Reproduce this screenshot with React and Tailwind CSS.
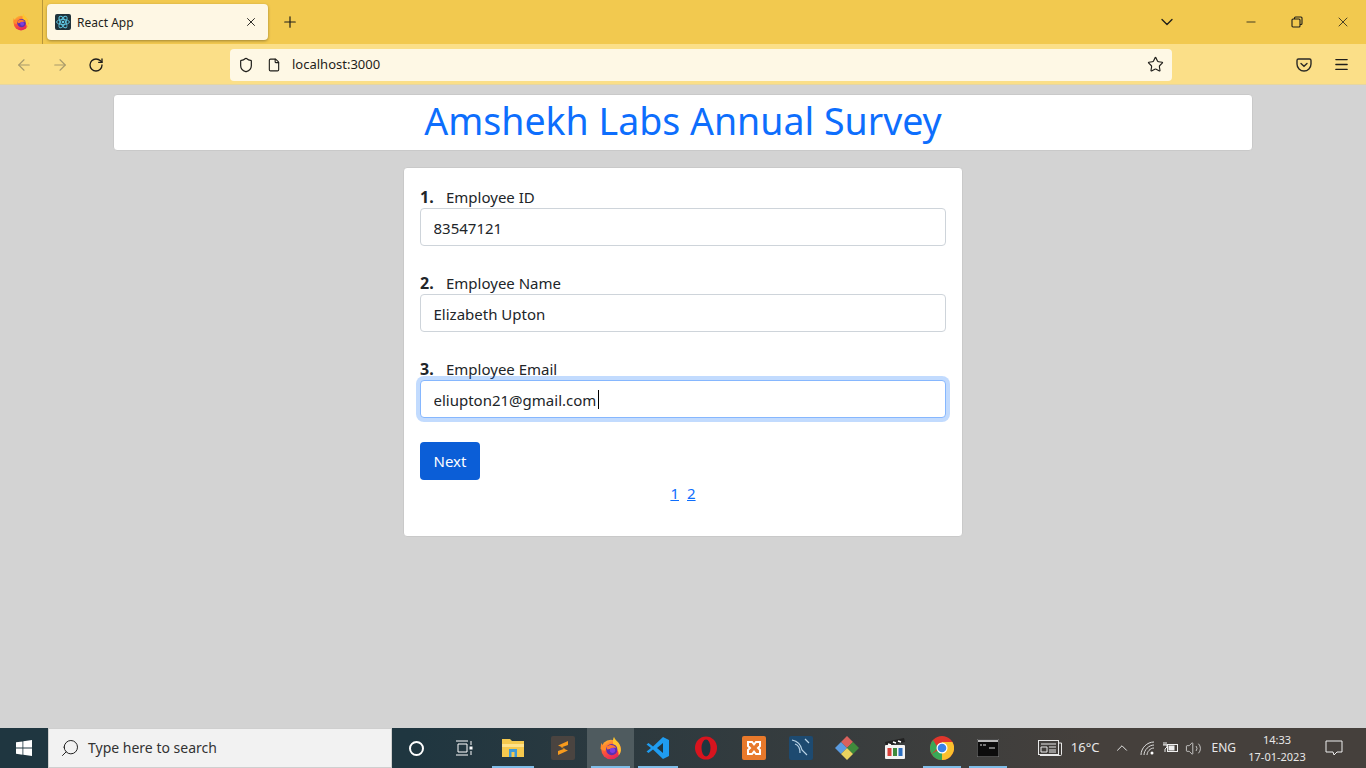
import React from "react";
import { ArrowLeft, ArrowRight, RotateCw, Shield, File, Star, ChevronDown, ChevronUp, Minus, X, Plus, Menu, Search, Volume2 } from "lucide-react";

const UI = "font-['Noto_Sans','Open_Sans',sans-serif]";

function Firefox({ size = 16 }) {
  return (
    <svg width={size} height={size} viewBox="0 0 32 32">
      <defs>
        <linearGradient id={`ff${size}`} x1="0.2" y1="0" x2="0.7" y2="1">
          <stop offset="0" stopColor="#ffbd2e" />
          <stop offset="0.45" stopColor="#ff5a36" />
          <stop offset="1" stopColor="#e3205f" />
        </linearGradient>
      </defs>
      <circle cx="16" cy="18" r="13" fill={`url(#ff${size})`} />
      <path d="M20 1c1 5 8 7 9 15 1 5-1 8-3 10 1-5-2-9-6-12-2-4-2-9 0-13z" fill="#ffc42e" />
      <path d="M3 9c1 4 4 5 8 5l-3 6-6-3z" fill="#ff8a2b" />
      <circle cx="17" cy="18" r="7.5" fill="#5b2fb0" />
      <path d="M10 14c4-3 11-3 13 2-3-1-5 0-7 1l-5 1z" fill="#ff7a2f" />
      <circle cx="18" cy="19" r="3.5" fill="#7d3fe0" />
    </svg>
  );
}

function ReactFav() {
  return (
    <svg width="16" height="16" viewBox="0 0 16 16">
      <rect width="16" height="16" rx="2" fill="#20333b" />
      <g fill="none" stroke="#61c9e4" strokeWidth="0.9">
        <ellipse cx="8" cy="8" rx="6.4" ry="2.6" />
        <ellipse cx="8" cy="8" rx="6.4" ry="2.6" transform="rotate(60 8 8)" />
        <ellipse cx="8" cy="8" rx="6.4" ry="2.6" transform="rotate(120 8 8)" />
      </g>
      <circle cx="8" cy="8" r="1.3" fill="#61c9e4" />
    </svg>
  );
}

function Pocket() {
  return (
    <svg width="16" height="16" viewBox="0 0 16 16" fill="none" stroke="#2b2a26" strokeWidth="1.4">
      <path d="M2.5 2h11A1.5 1.5 0 0 1 15 3.500V7a7 7 0 0 1-14 0V3.500A1.500 1.500 0 0 1 2.500 2z" />
      <path d="M5 6.500l3 2.800 3-2.800" strokeLinecap="round" />
    </svg>
  );
}

function Restore() {
  return (
    <svg width="12" height="12" viewBox="0 0 12 12" fill="none" stroke="#1f1e1a" strokeWidth="1.1">
      <rect x="1" y="3" width="8" height="8" rx="1" />
      <path d="M3.500 3V2a1 1 0 0 1 1-1h5.500a1 1 0 0 1 1 1v5.500a1 1 0 0 1-1 1H9" />
    </svg>
  );
}

function Field({ n, label, value, focused, last }) {
  return (
    <div className={last ? "mb-6" : "mb-[26px]"}>
      <label className="flex h-[22px] items-center text-[15px] leading-6 text-[#212529]">
        <b className="w-[26px] text-base font-bold">{n}.</b>
        {label}
      </label>
      <div className="relative">
        <input
          readOnly
          value={value}
          className={
            "block h-[38px] w-full rounded border bg-white pt-[1px] pl-[12.5px] pr-[13px] text-[15px] text-[#212529] outline-none " +
            (focused
              ? "border-[#86b7fe] shadow-[0_0_0_4px_rgba(13,110,253,0.25)]"
              : "border-[#ced4da]")
          }
        />
        {focused && <span className="absolute left-[178px] top-[10px] h-[19px] w-px bg-black" />}
      </div>
    </div>
  );
}

function Tb({ children, active, open, w = 48 }) {
  return (
    <div
      className={"relative flex h-10 shrink-0 items-center justify-center " + (active ? "bg-[#4f5b5f]" : "")}
      style={{ width: w }}
    >
      {children}
      {open && <span className="absolute bottom-0 left-[4px] right-[4px] h-[2px] bg-[#7fbde8]" />}
    </div>
  );
}

export default function App() {
  return (
    <div className={"flex h-screen w-full flex-col overflow-hidden bg-[#d3d3d3] " + UI}>
      {/* tab strip */}
      <div className="flex h-[44px] shrink-0 items-center bg-[#f2c94f]">
        <div className="flex h-full w-[43px] items-center justify-center border-r border-[#b8963a]">
          <Firefox size={18} />
        </div>
        <div className="ml-[4px] flex h-[36px] w-[221px] items-center rounded bg-[#fef7e4] pl-2 pr-[10px] shadow-[0_1px_3px_rgba(0,0,0,0.35)]">
          <ReactFav />
          <span className="ml-[6px] flex-1 pt-[1px] text-xs text-[#1f1e1a]">React App</span>
          <X size={14} strokeWidth={1.6} className="text-[#1f1e1a]" />
        </div>
        <Plus size={18} strokeWidth={1.6} className="ml-[13px] text-[#1f1e1a]" />
        <div className="flex-1" />
        <ChevronDown size={20} strokeWidth={1.6} className="mr-[67px] text-[#1f1e1a]" />
        <Minus size={14} strokeWidth={1.4} className="mr-[33px] text-[#1f1e1a]" />
        <Restore />
        <X size={16} strokeWidth={1.2} className="ml-[32px] mr-[15px] text-[#1f1e1a]" />
      </div>
      {/* nav bar */}
      <div className="flex h-[41px] shrink-0 items-center border-b border-[#e6d6a0] bg-[#fbdf88] pt-[1px]">
        <ArrowLeft size={18} strokeWidth={1.5} className="ml-[15px] text-[#a89a6a]" />
        <ArrowRight size={18} strokeWidth={1.5} className="ml-[18px] text-[#a89a6a]" />
        <RotateCw size={16} strokeWidth={2} className="ml-[19px] text-[#1f1e1a]" />
        <div className="ml-[126px] flex h-[32px] w-[942px] items-center rounded bg-[#fef8e5] pl-[8px] pr-[8px]">
          <Shield size={16} strokeWidth={1.8} className="text-[#1f1e1a]" />
          <File size={14} strokeWidth={1.9} className="ml-[13px] text-[#1f1e1a]" />
          <span className="ml-[11px] flex-1 text-[13px] text-[#1f1e1a]">localhost:3000</span>
          <Star size={17} strokeWidth={1.6} className="text-[#1f1e1a]" />
        </div>
        <div className="flex-1" />
        <div className="mr-[21px]"><Pocket /></div>
        <Menu size={17} strokeWidth={1.8} className="mr-[16px] text-[#1f1e1a]" />
      </div>

      {/* page */}
      <main className="flex min-h-0 flex-1 flex-col items-center pt-[9px]">
        <div className="flex h-[57px] w-[1140px] shrink-0 items-center justify-center rounded border border-[#c9c9c9] bg-white pb-[3px]">
          <h1 className="text-[37.5px] leading-[48px] font-normal text-[#0d6efd]">Amshekh Labs Annual Survey</h1>
        </div>
        <div className="mt-4 h-[370px] w-[560px] shrink-0 rounded border border-[#c9c9c9] bg-white px-4 pt-[18px]">
          <Field n={1} label="Employee ID" value="83547121" />
          <Field n={2} label="Employee Name" value="Elizabeth Upton" />
          <Field n={3} label="Employee Email" value="eliupton21@gmail.com" focused last />
          <button className="block h-[38px] w-[60px] rounded bg-[#0b5ed7] pt-[1px] text-center text-[15px] text-white">Next</button>
          <div className="mt-[1px] flex justify-center gap-[8px] text-[15px] leading-6 text-[#0d6efd]">
            <a className="underline">1</a>
            <a className="underline">2</a>
          </div>
        </div>
      </main>

      {/* taskbar */}
      <div className="flex h-10 shrink-0 items-center bg-gradient-to-r from-[#1f3640] from-30% to-[#45403c] to-80%">
        <div className="flex h-10 w-[48px] items-center justify-center">
          <svg width="16" height="16" viewBox="0 0 16 16" fill="#fff">
            <path d="M0 2.300l6.500-.9v6.200H0zM7.300 1.300L16 0v7.600H7.300zM0 8.400h6.500v6.300L0 13.800zM7.300 8.400H16V16l-8.700-1.200z" />
          </svg>
        </div>
        <div className="flex h-10 w-[344px] items-center border border-[#cfcfcf] bg-[#f2f2f2] pl-[11px]">
          <Search size={20} strokeWidth={1.2} className="-scale-x-100 text-[#222]" />
          <span className="ml-[8px] text-sm text-[#333]">Type here to search</span>
        </div>
        <Tb><span className="block h-[15px] w-[15px] rounded-full border-2 border-white" /></Tb>
        <Tb>
          <svg width="18" height="18" viewBox="0 0 18 18" fill="none" stroke="#fff" strokeWidth="1">
            <path d="M1 2h12M1 16h12M3 5h9v8H3zM16 2v4M16 12v4" />
            <rect x="14.500" y="7.500" width="3" height="3" fill="#fff" stroke="none" />
          </svg>
        </Tb>
        <Tb open w={50}>
          <svg width="22" height="20" viewBox="0 0 22 20">
            <path d="M0 1h8l2 2h12v16H0z" fill="#f5c94e" />
            <path d="M0 6h22v3H0z" fill="#ffe28a" />
            <rect x="7" y="11" width="8" height="8" fill="#3d9ad8" />
            <rect x="9.500" y="14" width="3" height="5" fill="#f5c94e" />
          </svg>
        </Tb>
        <Tb w={49}>
          <svg width="24" height="24" viewBox="0 0 24 24">
            <rect width="24" height="24" rx="2" fill="#4a4440" />
            <path d="M17 5L7 9.500l7 3-7 2.500v4l10-4.500-7-3 7-2.500z" fill="#f79b1d" />
          </svg>
        </Tb>
        <Tb active open w={47}><Firefox size={24} /></Tb>
        <Tb open>
          <svg width="24" height="24" viewBox="0 0 24 24">
            <path d="M17 1l6 3v16l-6 3-10-9.500L2.500 17 .5 15.500 5 12 .5 8.500 2.500 7 7 10.500z" fill="#1f9cf0" />
            <path d="M17 7l-6 5 6 5z" fill="#20353f" />
          </svg>
        </Tb>
        <Tb>
          <svg width="24" height="24" viewBox="0 0 24 24">
            <ellipse cx="12" cy="12" rx="11" ry="11.500" fill="#d8141e" />
            <ellipse cx="12" cy="12" rx="4.500" ry="8.500" fill="#20353f" />
          </svg>
        </Tb>
        <Tb>
          <svg width="24" height="24" viewBox="0 0 24 24">
            <rect width="24" height="24" rx="2" fill="#e8792b" />
            <path d="M6 6h4l2 2.500L14 6h4v4l-2 2 2 2v4h-4l-2-2.500L10 18H6v-4l2-2-2-2z" fill="none" stroke="#fff" strokeWidth="2" />
          </svg>
        </Tb>
        <Tb w={45}>
          <svg width="24" height="24" viewBox="0 0 24 24">
            <rect width="24" height="24" rx="2" fill="#1d4a70" />
            <path d="M3 4c5 1 9 5 10 10l5 5M6 8c3 1 5 4 5 9M16 3l4 4" fill="none" stroke="#b9d3e6" strokeWidth="1.200" />
          </svg>
        </Tb>
        <Tb>
          <svg width="24" height="24" viewBox="0 0 24 24">
            <path d="M12 0l6 6-6 6-6-6z" fill="#d9615c" />
            <path d="M0 12l6-6 6 6-6 6z" fill="#5a9be0" />
            <path d="M24 12l-6-6-6 6 6 6z" fill="#3f8a3c" />
            <path d="M12 24l6-6-6-6-6 6z" fill="#e9d35f" />
          </svg>
        </Tb>
        <Tb>
          <svg width="24" height="24" viewBox="0 0 24 24">
            <path d="M2 6l19-4 1 4-19 4z" fill="#222" />
            <path d="M5 8l3 1M10 6l3 1M15 5l3 1" stroke="#fff" strokeWidth="1.500" />
            <rect x="2" y="9" width="20" height="14" rx="1" fill="#f4f4f4" />
            <rect x="4.500" y="12" width="4" height="8" fill="#d9413a" />
            <rect x="10" y="12" width="4" height="8" fill="#3f8a3c" />
            <rect x="15.500" y="12" width="4" height="8" fill="#2c6fc0" />
          </svg>
        </Tb>
        <Tb open w={46}>
          <svg width="24" height="24" viewBox="0 0 24 24">
            <circle cx="12" cy="12" r="12" fill="#e0362c" />
            <path d="M12 12L1.600 18a12 12 0 0 0 10.400 6z" fill="#3aa757" />
            <path d="M1.600 18A12 12 0 0 1 3 4l5 8z" fill="#3aa757" />
            <path d="M12 24a12 12 0 0 0 10.400-18H12z" fill="#fbc02d" />
            <circle cx="12" cy="12" r="5.500" fill="#fff" />
            <circle cx="12" cy="12" r="4.300" fill="#3b82e8" />
          </svg>
        </Tb>
        <Tb open w={46}>
          <svg width="22" height="18" viewBox="0 0 22 18">
            <rect width="22" height="18" fill="#0c0c0c" stroke="#8a8a8a" />
            <rect x="1" y="1" width="20" height="2" fill="#b9b9b9" />
            <path d="M3 6h2M6 6h3M12 9h6" stroke="#ddd" />
          </svg>
        </Tb>
        <div className="flex-1" />
        <div className="flex items-center text-[#e8e8e8]">
          <svg width="24" height="16" viewBox="0 0 24 16" fill="none" stroke="#e8e8e8" strokeWidth="1">
            <rect x="0.500" y="0.500" width="20" height="14" />
            <path d="M21 3h2.500v11.500a1 1 0 0 1-1 1H2M3 4h15M3 7h6v5H3zM11 7h7M11 10h7M11 12h7" />
          </svg>
          <span className="ml-[9px] text-[13px]">16°C</span>
          <ChevronUp size={18} strokeWidth={1.3} className="ml-[14px]" />
          <svg className="ml-[9px]" width="15" height="15" viewBox="0 0 15 15" fill="none" stroke="#ddd" strokeWidth="1">
            <path d="M1 14C1 7 7 1 14 1M4 14c0-5 5-10 10-10M7 14c0-3 3-7 7-7" />
            <circle cx="12" cy="12" r="1.500" fill="#fff" stroke="none" />
          </svg>
          <svg className="ml-[7px]" width="16" height="12" viewBox="0 0 16 12" fill="none" stroke="#eee" strokeWidth="1">
            <rect x="5.500" y="2.500" width="10" height="7" />
            <rect x="7" y="4" width="5" height="4" fill="#eee" />
            <path d="M2 0v3M4 0v3M1 3h4v2L3 7v3" />
          </svg>
          <Volume2 size={17} strokeWidth={1.1} className="ml-[7px]" />
          <span className="ml-[9px] text-xs">ENG</span>
          <div className="ml-[9px] flex w-[64px] flex-col items-center text-[11px] leading-[17px]">
            <span>14:33</span>
            <span>17-01-2023</span>
          </div>
          <svg className="ml-[16px] mr-[23px]" width="18" height="16" viewBox="0 0 18 16" fill="none" stroke="#eee" strokeWidth="1">
            <path d="M1 1h16v11h-5l-3 3-1-3H1z" />
          </svg>
        </div>
      </div>
    </div>
  );
}
